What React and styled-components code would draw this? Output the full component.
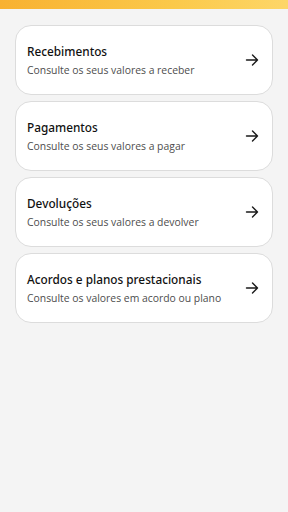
import React from 'react';
import styled, { createGlobalStyle } from 'styled-components';

const GlobalStyle = createGlobalStyle`
    html, body {
        margin: 0;
        padding: 0;
        background: #f4f4f4;
        font-family: 'Open Sans', 'Noto Sans', sans-serif;
    }
`;

const Page = styled.div`
    min-height: 512px;
    background: #f4f4f4;
`;

const TopBar = styled.div`
    height: 9px;
    background: linear-gradient(90deg, #f8b131 0%, #fbc94a 60%, #fdd668 100%);
`;

const List = styled.div`
    display: flex;
    flex-direction: column;
    gap: 6px;
    padding: 16px 15px 0 15px;
`;

const Card = styled.div`
    height: 70px;
    box-sizing: border-box;
    background: #ffffff;
    border: 1px solid #dcdcdc;
    border-radius: 16px;
    display: flex;
    align-items: center;
    justify-content: space-between;
    padding: 0 13px 0 11px;
`;

const Texts = styled.div`
    display: flex;
    flex-direction: column;
    gap: 4px;
`;

const Title = styled.div`
    font-family: 'Noto Sans', 'Open Sans', sans-serif;
    font-size: 11.8px;
    font-weight: 500;
    color: #111111;
    line-height: 16px;
`;

const Subtitle = styled.div`
    font-size: 10.4px;
    color: #4d4d4d;
    line-height: 14px;
`;

const Arrow = () => (
    <svg width="14" height="14" viewBox="0 0 14 14" fill="none" stroke="#1a1a1a" strokeWidth="1.4" strokeLinecap="round" strokeLinejoin="round">
        <path d="M1.5 7h11M7.5 2l5 5-5 5" />
    </svg>
);

const items = [
    { title: 'Recebimentos', sub: 'Consulte os seus valores a receber' },
    { title: 'Pagamentos', sub: 'Consulte os seus valores a pagar' },
    { title: 'Devoluções', sub: 'Consulte os seus valores a devolver' },
    { title: 'Acordos e planos prestacionais', sub: 'Consulte os valores em acordo ou plano' },
];

const App = () => {
    return (
        <Page>
            <GlobalStyle />
            <TopBar />
            <List>
                {items.map((it) => (
                    <Card key={it.title}>
                        <Texts>
                            <Title>{it.title}</Title>
                            <Subtitle>{it.sub}</Subtitle>
                        </Texts>
                        <Arrow />
                    </Card>
                ))}
            </List>
        </Page>
    );
};

export default App;
